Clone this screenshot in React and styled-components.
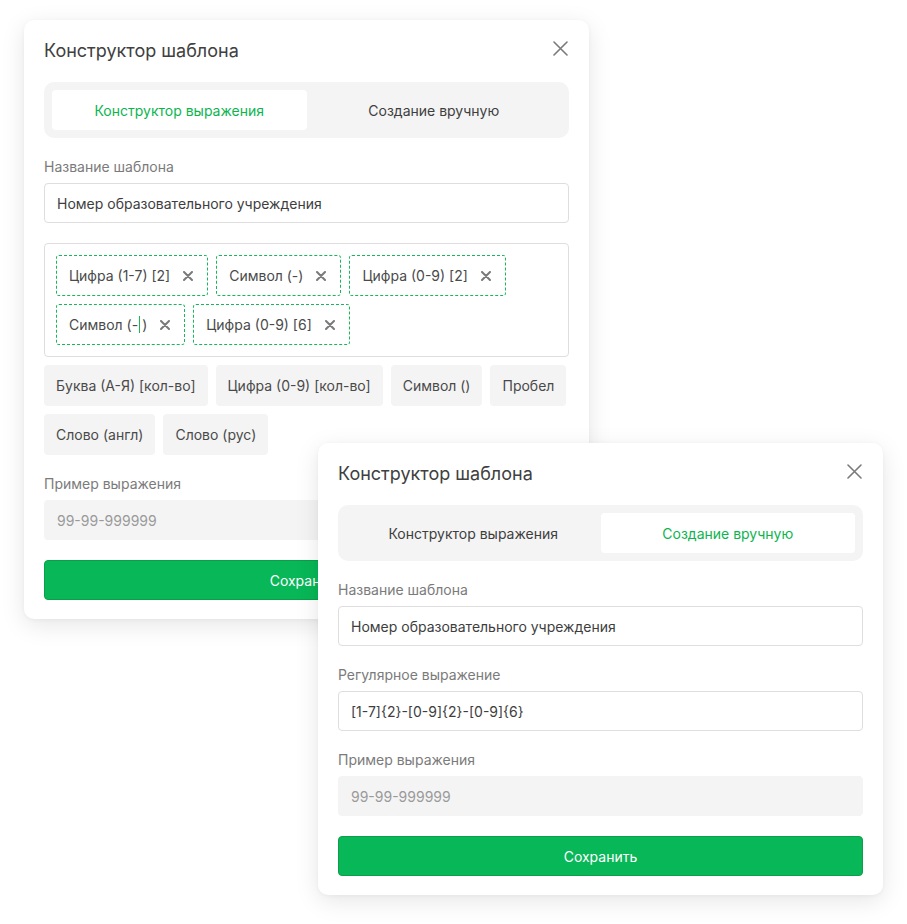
import styled, { createGlobalStyle } from 'styled-components'

const GlobalStyle = createGlobalStyle`
  body {
    margin: 0;
    background: #ffffff;
    font-family: Inter, 'Noto Sans', sans-serif;
  }
`

const chips = [
  { label: 'Цифра (1-7) [2]' },
  { label: 'Символ (-)' },
  { label: 'Цифра (0-9) [2]' },
  { label: 'Символ (-', tail: ')', caret: true },
  { label: 'Цифра (0-9) [6]' }
]

const tokens = [
  'Буква (А-Я) [кол-во]',
  'Цифра (0-9) [кол-во]',
  'Символ ()',
  'Пробел',
  'Слово (англ)',
  'Слово (рус)'
]

function CloseIcon() {
  return (
    <svg width="15" height="15" viewBox="0 0 15 15">
      <path d="M1 1 L14 14 M14 1 L1 14" stroke="#7a7a7a" strokeWidth="1.6" strokeLinecap="round" />
    </svg>
  )
}

function RemoveIcon() {
  return (
    <svg width="10" height="10" viewBox="0 0 10 10">
      <path d="M1 1 L9 9 M9 1 L1 9" stroke="#7a7a7a" strokeWidth="2" strokeLinecap="round" />
    </svg>
  )
}

function Header({ mode }) {
  return (
    <>
      <TitleRow>
        <Title>Конструктор шаблона</Title>
        <CloseButton>
          <CloseIcon />
        </CloseButton>
      </TitleRow>
      <Tabs>
        <Tab active={mode === 'builder'}>Конструктор выражения</Tab>
        <Tab active={mode === 'manual'}>Создание вручную</Tab>
      </Tabs>
    </>
  )
}

function BuilderCard() {
  return (
    <Card left={24} top={20}>
      <Header mode="builder" />
      <Field>
        <Label>Название шаблона</Label>
        <Input>Номер образовательного учреждения</Input>
      </Field>
      <Section>
        <ChipBox>
          {chips.map((c, i) => (
            <Chip key={i}>
              <span>
                {c.label}
                {c.caret && <Caret />}
                {c.tail}
              </span>
              <RemoveIcon />
            </Chip>
          ))}
        </ChipBox>
        <TokenList>
          {tokens.map((t) => (
            <Token key={t}>{t}</Token>
          ))}
        </TokenList>
      </Section>
      <Field>
        <Label>Пример выражения</Label>
        <Input muted>99-99-999999</Input>
      </Field>
      <SaveButton>Сохранить</SaveButton>
    </Card>
  )
}

function ManualCard() {
  return (
    <Card left={318} top={443}>
      <Header mode="manual" />
      <Field>
        <Label>Название шаблона</Label>
        <Input>Номер образовательного учреждения</Input>
      </Field>
      <Field>
        <Label>Регулярное выражение</Label>
        <Input>{'[1-7]{2}-[0-9]{2}-[0-9]{6}'}</Input>
      </Field>
      <Field>
        <Label>Пример выражения</Label>
        <Input muted>99-99-999999</Input>
      </Field>
      <SaveButton>Сохранить</SaveButton>
    </Card>
  )
}

export default function App() {
  return (
    <>
      <GlobalStyle />
      <Canvas>
        <BuilderCard />
        <ManualCard />
      </Canvas>
    </>
  )
}

const Canvas = styled.div`
  position: relative;
  width: 907px;
  height: 924px;
  overflow: hidden;
`

const Card = styled.div`
  position: absolute;
  left: ${(p) => p.left}px;
  top: ${(p) => p.top}px;
  width: 565px;
  box-sizing: border-box;
  padding: 20px 20px 19px;
  background: #fff;
  border-radius: 10px;
  box-shadow: 0 6px 24px rgba(0, 0, 0, 0.1), 0 1px 4px rgba(0, 0, 0, 0.04);
  display: flex;
  flex-direction: column;
`

const TitleRow = styled.div`
  display: flex;
  align-items: center;
  justify-content: space-between;
  height: 22px;
`

const Title = styled.h2`
  margin: 0;
  font-size: 18px;
  font-weight: 400;
  color: #404040;
  line-height: 22px;
`

const CloseButton = styled.div`
  display: flex;
  align-items: center;
  margin-top: -6px;
  margin-right: 1px;
`

const Tabs = styled.div`
  margin-top: 20px;
  height: 56px;
  box-sizing: border-box;
  padding: 8px;
  background: #f4f4f4;
  border-radius: 10px;
  display: grid;
  grid-template-columns: 1fr 1fr;
`

const Tab = styled.div`
  display: flex;
  align-items: center;
  justify-content: center;
  border-radius: 4px;
  font-size: 14px;
  background: ${(p) => (p.active ? '#fff' : 'transparent')};
  color: ${(p) => (p.active ? '#0cb450' : '#3e3e3e')};
`

const Field = styled.div`
  margin-top: 19px;
  display: flex;
  flex-direction: column;
  gap: 6px;
`

const Label = styled.div`
  font-size: 14px;
  line-height: 20px;
  color: #7b7b7b;
`

const Input = styled.div`
  height: 40px;
  box-sizing: border-box;
  padding: 0 12px;
  display: flex;
  align-items: center;
  font-size: 14px;
  border-radius: 4px;
  color: ${(p) => (p.muted ? '#9a9a9a' : '#3e3e3e')};
  background: ${(p) => (p.muted ? '#f4f4f4' : '#fff')};
  border: 1px solid ${(p) => (p.muted ? '#f4f4f4' : '#dedede')};
`

const Section = styled.div`
  margin-top: 20px;
  display: flex;
  flex-direction: column;
  gap: 8px;
`

const ChipBox = styled.div`
  border: 1px solid #dedede;
  border-radius: 4px;
  padding: 11px;
  display: flex;
  flex-wrap: wrap;
  gap: 8px;
`

const Chip = styled.div`
  height: 41px;
  box-sizing: border-box;
  padding: 0 14px 0 12px;
  display: flex;
  align-items: center;
  gap: 13px;
  border: 1px dashed #18b85a;
  border-radius: 3px;
  font-size: 14px;
  color: #4a4a4a;
`

const Caret = styled.span`
  display: inline-block;
  width: 1px;
  height: 17px;
  margin: 0 2px -3px 1px;
  background: #18b85a;
`

const TokenList = styled.div`
  display: flex;
  flex-wrap: wrap;
  gap: 8px;
`

const Token = styled.div`
  height: 41px;
  box-sizing: border-box;
  padding: 0 12px;
  display: flex;
  align-items: center;
  background: #f4f4f4;
  border-radius: 4px;
  font-size: 14px;
  color: #4a4a4a;
`

const SaveButton = styled.div`
  margin-top: 20px;
  height: 40px;
  box-sizing: border-box;
  display: flex;
  align-items: center;
  justify-content: center;
  background: #08b757;
  border: 1px solid #0a9f48;
  border-radius: 4px;
  color: #fff;
  font-size: 14px;
`
